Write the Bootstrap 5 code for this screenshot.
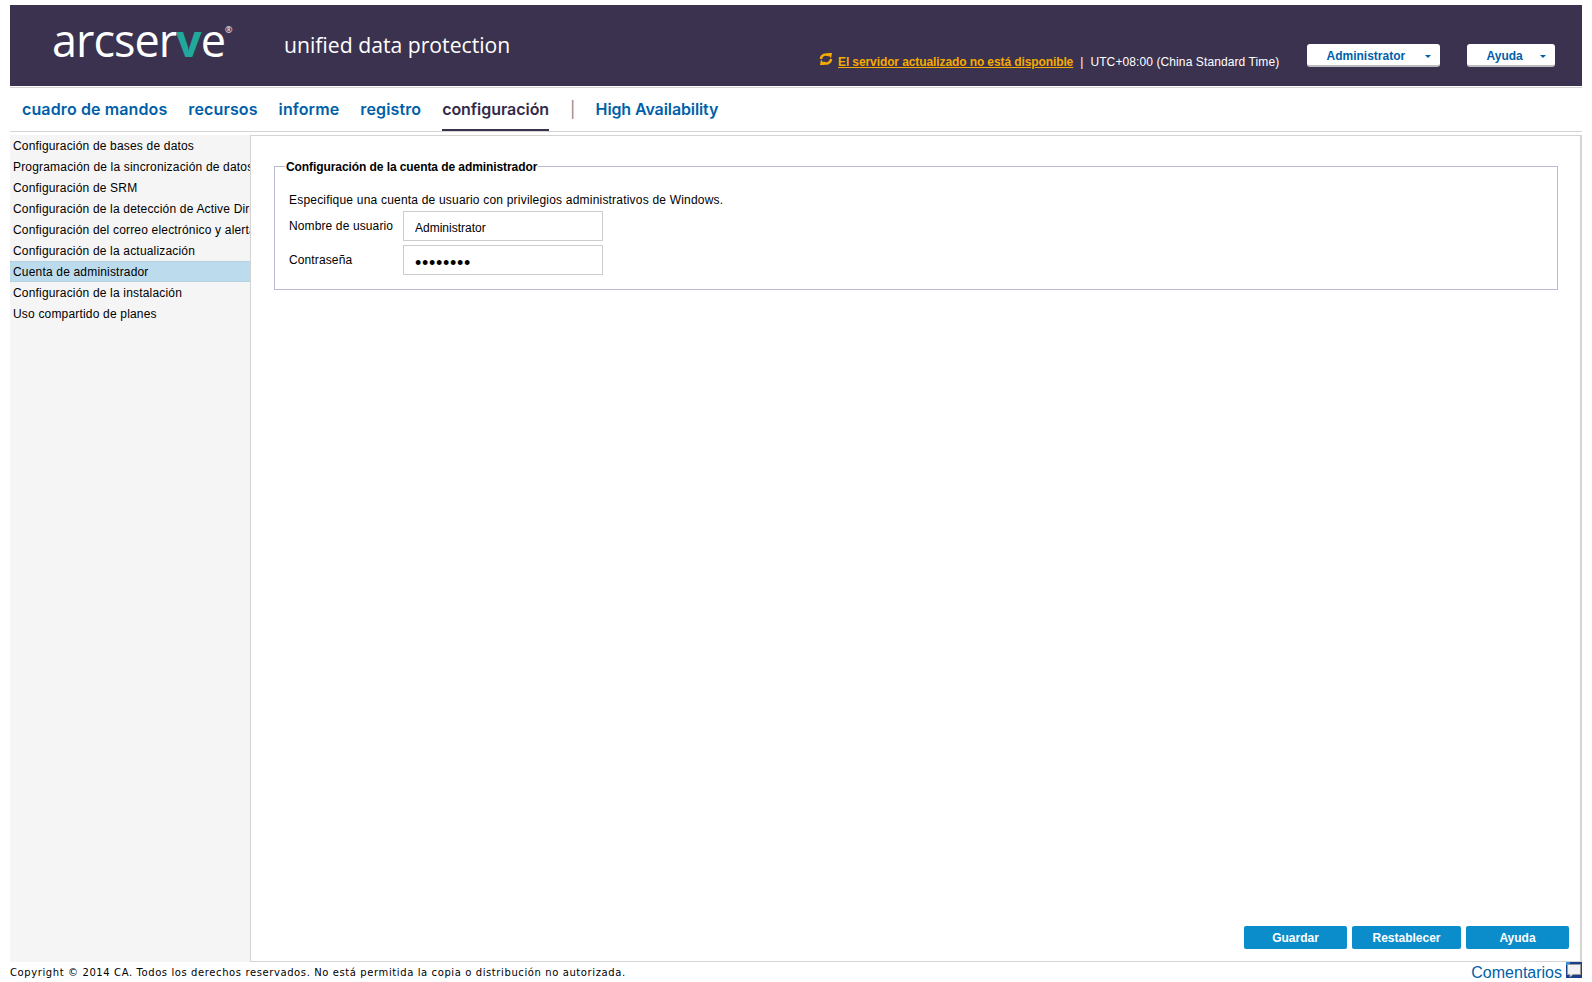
<!DOCTYPE html>
<html lang="es">
<head>
  <meta charset="UTF-8" />
  <meta name="viewport" content="width=device-width, initial-scale=1.0">
  <title>arcserve unified data protection</title>
  <link href="https://cdn.jsdelivr.net/npm/bootstrap@5.3.2/dist/css/bootstrap.min.css" rel="stylesheet">
  <style>
    html, body { height: 100%; }
    body {
      font-family: 'Liberation Sans', Arial, sans-serif;
      font-size: 12px;
      color: #000;
      background-color: #fff;
      overflow: hidden;
    }
    .page-wrap {
      width: 1572px;
      height: 982px;
      margin-left: 10px;
      padding-top: 5px;
    }
    .top-header {
      height: 81px;
      padding-right: 27px;
      background-color: #3b3250;
      color: #fff;
    }
    .logo-text {
      width: 243px;
      margin-top: 4px;
      padding-left: 42px;
      font-family: 'Open Sans', sans-serif;
      font-size: 45px;
      font-weight: 400;
      line-height: 62px;
      letter-spacing: -1px;
    }
    .logo-text span { color: #1fa89b; font-weight: 700; }
    .logo-text sup { font-size: 9px; top: -24px; letter-spacing: 0; }
    .product-name {
      width: 290px;
      margin-top: 26px;
      padding-left: 31px;
      font-family: 'Open Sans', sans-serif;
      font-size: 21.2px;
      line-height: 28px;
    }
    .server-status {
      margin-top: 48px;
      margin-left: 276px;
      line-height: 18px;
      letter-spacing: 0.1px;
    }
    .server-status svg { margin-right: 5px; margin-top: 0; vertical-align: top; }
    .server-status a { color: #f5ab00; font-weight: 700; letter-spacing: -0.1px; }
    .status-sep { margin: 0 7px; }
    .head-btn {
      height: 23px;
      margin-top: 39px;
      padding: 2px 9px 0 19px;
      font-size: 12px;
      font-weight: 700;
      line-height: 21px;
      color: #005fa8;
      background-color: #fff;
      border: 0;
      border-bottom: 2px solid #bdbdbd;
      border-radius: 3px;
    }
    .head-btn:hover { color: #005fa8; background-color: #fff; }
    .head-btn.dropdown-toggle::after {
      border-top-width: 3px;
      border-right-width: 3px;
      border-left-width: 3px;
      margin-left: 0;
      vertical-align: 2px;
    }
    .admin-btn { width: 133px; margin-left: auto; }
    .help-btn { width: 88px; margin-left: 27px; }
    .head-btn .btn-label { display: inline-block; }
    .admin-btn .btn-label { width: 98px; text-align: left; }
    .help-btn .btn-label { width: 53px; text-align: left; }
    .main-nav {
      height: 45px;
      margin-top: 1px;
      border-top: 1px solid #d4d4d4;
      border-bottom: 1px solid #d4d4d4;
      padding-left: 12px;
      font-family: 'Inter', sans-serif;
      font-size: 16px;
      font-weight: 600;
      letter-spacing: 0.12px;
    }
    .main-nav .nav-link {
      height: 43px;
      padding: 9px 0 0;
      margin-right: 21px;
      color: #005fa8;
    }
    .main-nav .nav-link.active {
      color: #332a48;
      letter-spacing: -0.05px;
      border-bottom: 2px solid #3b3250;
    }
    .main-nav .nav-link.ha-link { letter-spacing: -0.1px; }
    .nav-sep {
      padding-top: 9px;
      margin-right: 20px;
      font-weight: 400;
      color: #888;
    }
    .content-area {
      height: 827px;
      margin-top: 3px;
    }
    .side-menu {
      width: 240px;
      background-color: #f5f5f5;
      overflow: hidden;
    }
    .side-menu .list-group-item {
      height: 21px;
      padding: 0 0 0 3px;
      font-size: 12px;
      line-height: 23px;
      letter-spacing: 0.18px;
      white-space: nowrap;
      color: #000;
      background-color: transparent;
      border: 0;
    }
    .side-menu .list-group-item.active {
      margin-top: 0;
      background-color: #bcdcee;
      border-top: 1px dotted #b5c6d0;
      border-bottom: 1px dotted #b5c6d0;
      line-height: 21px;
    }
    .main-panel {
      width: 1332px;
      border: 1px solid #d4d4d4;
      border-right-width: 2px;
      padding: 22px 11px 12px 23px;
    }
    .account-box {
      height: 132px;
      margin-right: 11px;
      border: 1px solid #b9bcd2;
      padding: 0 14px;
    }
    .account-box legend {
      float: none;
      width: auto;
      margin: 0 0 0 -4px;
      padding: 2px 1px 0;
      font-size: 12px;
      font-weight: 700;
      line-height: 14px;
      letter-spacing: -0.08px;
    }
    .intro-text { margin: 19px 0 4px; line-height: 14px; letter-spacing: 0.2px; }
    .form-line { height: 30px; margin-bottom: 4px; }
    .form-line label { width: 114px; padding-top: 8px; line-height: 14px; letter-spacing: 0.12px; }
    .form-line .form-control {
      width: 200px;
      height: 30px;
      padding: 3px 11px 0;
      font-size: 12px;
      color: #000;
      border: 1px solid #ccc;
      border-radius: 0;
    }
    .form-line input[type=password] { padding-top: 6px; font-size: 18px; letter-spacing: 0.7px; }
    .action-btn {
      height: 23px;
      padding: 0;
      font-size: 12px;
      font-weight: 700;
      line-height: 25px;
      color: #fff;
      background-color: #0b8dcb;
      border: 0;
      border-radius: 2px;
    }
    .action-btn:hover { color: #fff; background-color: #0b8dcb; }
    .btn-row { gap: 5px; }
    .btn-save, .btn-help { width: 103px; }
    .btn-reset { width: 109px; }
    .page-foot { height: 20px; }
    .copy-text {
      font-family: 'DejaVu Sans', sans-serif;
      font-size: 10px;
      line-height: 22px;
      letter-spacing: 0.6px;
    }
    .feedback-link {
      font-size: 16px;
      line-height: 22px;
      color: #005fa8;
      text-decoration: none;
    }
    .feedback-link svg { margin-left: 4px; vertical-align: top; }
  </style>
</head>
<body>
  <div class="page-wrap">
    <header class="top-header d-flex align-items-start">
      <div class="logo-text">arcser<span>v</span>e<sup>®</sup></div>
      <div class="product-name">unified data protection</div>
      <div class="server-status text-nowrap">
        <svg width="14" height="12" viewBox="0 0 14 12" aria-hidden="true">
          <path d="M2 6 A5 4.6 0 0 1 10 2.4" fill="none" stroke="#f5ab00" stroke-width="2.4"/>
          <path d="M8 0 L13 0 L12 5.5 Z" fill="#f5ab00"/>
          <path d="M12 6 A5 4.6 0 0 1 4 9.6" fill="none" stroke="#f5ab00" stroke-width="2.4"/>
          <path d="M6 12 L1 12 L2 6.5 Z" fill="#f5ab00"/>
        </svg><a href="#">El servidor actualizado no está disponible</a><span class="status-sep">|</span>UTC+08:00 (China Standard Time)
      </div>
      <button type="button" class="btn head-btn admin-btn dropdown-toggle"><span class="btn-label">Administrator</span></button>
      <button type="button" class="btn head-btn help-btn dropdown-toggle"><span class="btn-label">Ayuda</span></button>
    </header>

    <ul class="nav main-nav">
      <li class="nav-item"><a class="nav-link" href="#">cuadro de mandos</a></li>
      <li class="nav-item"><a class="nav-link" href="#">recursos</a></li>
      <li class="nav-item"><a class="nav-link" href="#">informe</a></li>
      <li class="nav-item"><a class="nav-link" href="#">registro</a></li>
      <li class="nav-item"><a class="nav-link active" href="#">configuración</a></li>
      <li class="nav-item nav-sep">|</li>
      <li class="nav-item"><a class="nav-link ha-link" href="#">High Availability</a></li>
    </ul>

    <div class="content-area d-flex">
      <div class="side-menu list-group rounded-0">
        <a href="#" class="list-group-item">Configuración de bases de datos</a>
        <a href="#" class="list-group-item">Programación de la sincronización de datos</a>
        <a href="#" class="list-group-item">Configuración de SRM</a>
        <a href="#" class="list-group-item">Configuración de la detección de Active Directory</a>
        <a href="#" class="list-group-item">Configuración del correo electrónico y alertas</a>
        <a href="#" class="list-group-item">Configuración de la actualización</a>
        <a href="#" class="list-group-item active">Cuenta de administrador</a>
        <a href="#" class="list-group-item">Configuración de la instalación</a>
        <a href="#" class="list-group-item">Uso compartido de planes</a>
      </div>
      <main class="main-panel d-flex flex-column justify-content-between">
        <fieldset class="account-box">
          <legend>Configuración de la cuenta de administrador</legend>
          <p class="intro-text">Especifique una cuenta de usuario con privilegios administrativos de Windows.</p>
          <div class="form-line d-flex">
            <label for="userName">Nombre de usuario</label>
            <input type="text" class="form-control" id="userName" value="Administrator">
          </div>
          <div class="form-line d-flex">
            <label for="userPass">Contraseña</label>
            <input type="password" class="form-control" id="userPass" value="password">
          </div>
        </fieldset>
        <div class="btn-row d-flex justify-content-end">
          <button type="button" class="btn action-btn btn-save">Guardar</button>
          <button type="button" class="btn action-btn btn-reset">Restablecer</button>
          <button type="button" class="btn action-btn btn-help">Ayuda</button>
        </div>
      </main>
    </div>

    <footer class="page-foot d-flex justify-content-between">
      <div class="copy-text">Copyright © 2014 CA. Todos los derechos reservados. No está permitida la copia o distribución no autorizada.</div>
      <a href="#" class="feedback-link">Comentarios<svg width="16" height="16" viewBox="0 0 16 16" aria-hidden="true">
          <rect width="16" height="16" fill="#1d3f8a"/>
          <rect x="0" y="0" width="4" height="3" fill="#2a8fd8"/>
          <path d="M1.5 2.5 H14.5 V12.5 H7 L4 15 V12.5 H1.5 Z" fill="#f2f2f2" stroke="#9a9a9a" stroke-width="1"/>
        </svg></a>
    </footer>
  </div>
  <script src="https://cdn.jsdelivr.net/npm/bootstrap@5.3.2/dist/js/bootstrap.bundle.min.js"></script>
</body>
</html>
